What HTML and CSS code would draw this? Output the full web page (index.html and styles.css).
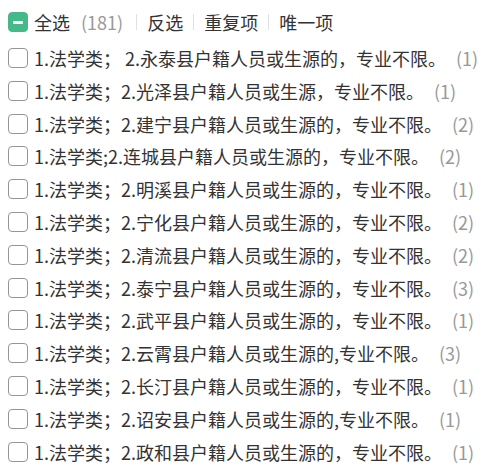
FILE: index.html
```html
<!DOCTYPE html>
<html lang="zh-CN">
<head>
<meta charset="utf-8">
<link rel="stylesheet" href="styles.css">
</head>
<body>
<div class="list">
  <div class="header">
    <span class="box box-indeterminate"><span class="minus"></span></span>
    <span class="label">全选</span><span class="count">(181)</span>
    <span class="sep"></span>
    <span class="action">反选</span>
    <span class="sep"></span>
    <span class="action">重复项</span>
    <span class="sep"></span>
    <span class="action">唯一项</span>
  </div>
  <div class="row"><span class="box"></span><span class="label">1.法学类； 2.永泰县户籍人员或生源的，专业不限。</span><span class="count">(1)</span></div>
  <div class="row"><span class="box"></span><span class="label">1.法学类；2.光泽县户籍人员或生源，专业不限。</span><span class="count">(1)</span></div>
  <div class="row"><span class="box"></span><span class="label">1.法学类；2.建宁县户籍人员或生源的，专业不限。</span><span class="count">(2)</span></div>
  <div class="row"><span class="box"></span><span class="label">1.法学类;2.连城县户籍人员或生源的，专业不限。</span><span class="count">(2)</span></div>
  <div class="row"><span class="box"></span><span class="label">1.法学类；2.明溪县户籍人员或生源的，专业不限。</span><span class="count">(1)</span></div>
  <div class="row"><span class="box"></span><span class="label">1.法学类；2.宁化县户籍人员或生源的，专业不限。</span><span class="count">(2)</span></div>
  <div class="row"><span class="box"></span><span class="label">1.法学类；2.清流县户籍人员或生源的，专业不限。</span><span class="count">(2)</span></div>
  <div class="row"><span class="box"></span><span class="label">1.法学类；2.泰宁县户籍人员或生源的，专业不限。</span><span class="count">(3)</span></div>
  <div class="row"><span class="box"></span><span class="label">1.法学类；2.武平县户籍人员或生源的，专业不限。</span><span class="count">(1)</span></div>
  <div class="row"><span class="box"></span><span class="label">1.法学类；2.云霄县户籍人员或生源的,专业不限。</span><span class="count">(3)</span></div>
  <div class="row"><span class="box"></span><span class="label">1.法学类；2.长汀县户籍人员或生源的，专业不限。</span><span class="count">(1)</span></div>
  <div class="row"><span class="box"></span><span class="label">1.法学类；2.诏安县户籍人员或生源的,专业不限。</span><span class="count">(1)</span></div>
  <div class="row"><span class="box"></span><span class="label">1.法学类；2.政和县户籍人员或生源的，专业不限。</span><span class="count">(1)</span></div>
</div>
</body>
</html>
```

FILE: styles.css
```css
html, body {
  margin: 0;
  padding: 0;
  background: #ffffff;
  overflow: hidden;
}

body {
  padding: 8px;
  font-family: "Noto Sans CJK SC", "Noto Sans", sans-serif;
  font-size: 18px;
  color: #333333;
}

.list {
  display: flex;
  flex-direction: column;
}

.header {
  display: flex;
  align-items: center;
  height: 28px;
  white-space: nowrap;
}

.row {
  display: flex;
  align-items: center;
  height: 32.8px;
  white-space: nowrap;
}

.header + .row {
  margin-top: 5.6px;
}

.box {
  box-sizing: border-box;
  flex: none;
  width: 20px;
  height: 20px;
  border: 1.5px solid #959595;
  border-radius: 4px;
  margin-right: 6px;
  display: flex;
  align-items: center;
  justify-content: center;
  background: #fff;
}

.box-indeterminate {
  background: #45b98a;
  border-color: #45b98a;
}

.minus {
  width: 10px;
  height: 3px;
  border-radius: 1px;
  background: #ffffff;
}

.label {
  line-height: 1;
}

.count {
  color: #999999;
  margin-left: 10px;
  line-height: 1;
}

.header .count {
  margin-left: 11px;
}

.sep {
  width: 1px;
  height: 16px;
  background: #e0e0e0;
  margin: 0 10px;
}

.header .count + .sep {
  margin-left: 13px;
}

.action {
  line-height: 1;
}
```
